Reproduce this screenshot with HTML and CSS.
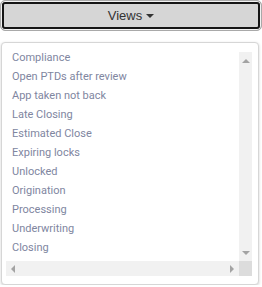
FILE: index.html
```html
<!DOCTYPE html>
<html lang="en">
<head>
  <meta charset="UTF-8">
  <meta name="viewport" content="width=device-width, initial-scale=1.0">
  <title>Views</title>
  <link rel="stylesheet" href="styles.css">
</head>
<body>
  <div class="views">
    <button class="views-btn">Views <span class="caret"></span></button>

    <div class="menu">
      <div class="scroller">
        <ul class="view-list">
          <li>Compliance</li>
          <li>Open PTDs after review</li>
          <li>App taken not back</li>
          <li>Late Closing</li>
          <li>Estimated Close</li>
          <li>Expiring locks</li>
          <li>Unlocked</li>
          <li>Origination</li>
          <li>Processing</li>
          <li>Underwriting</li>
          <li>Closing</li>
        </ul>
        <div class="vbar">
          <span class="arrow up"></span>
          <span class="arrow down"></span>
        </div>
        <div class="hbar">
          <span class="arrow left"></span>
          <span class="arrow right"></span>
        </div>
        <div class="corner"></div>
      </div>
    </div>
  </div>
</body>
</html>
```

FILE: styles.css
```css
body {
  margin: 0;
  background: #fff;
  font-family: Roboto, "Liberation Sans", Arial, sans-serif;
}

.views {
  width: 262px;
}

.views-btn {
  display: flex;
  justify-content: center;
  align-items: center;
  gap: 4px;
  width: 262px;
  height: 31px;
  margin: 0;
  padding: 0 0 1px;
  border: 1px solid #a9a9a9;
  border-radius: 5px;
  background: #d6d6d6;
  box-shadow: inset 0 0 0 1px #f2f2f2, inset 0 0 0 3px #151515;
  font-family: "Liberation Sans", Arial, sans-serif;
  font-size: 13px;
  color: #333;
}

.caret {
  width: 0;
  height: 0;
  margin-top: 1px;
  border-left: 4px solid transparent;
  border-right: 4px solid transparent;
  border-top: 4px solid #333;
}

.menu {
  box-sizing: border-box;
  width: 258px;
  height: 243px;
  margin: 11px 0 0 1px;
  padding: 9px 6px 8px 4px;
  border: 1px solid #d6d6d6;
  border-radius: 4px;
  background: #fff;
  box-shadow: 0 1px 3px rgba(0, 0, 0, 0.18);
}

.scroller {
  display: grid;
  grid-template-columns: 1fr 13px;
  grid-template-rows: 1fr 15px;
  height: 100%;
}

.view-list {
  list-style: none;
  margin: -4px 0 0;
  padding: 0 0 0 6px;
}

.view-list li {
  height: 19px;
  line-height: 19px;
  font-size: 11px;
  color: #80869f;
  white-space: nowrap;
}

.vbar {
  display: flex;
  flex-direction: column;
  justify-content: space-between;
  align-items: center;
  padding: 7px 0 6px;
  background: #f1f1f1;
}

.hbar {
  display: flex;
  justify-content: space-between;
  align-items: center;
  padding: 0 5px 0 5px;
  background: #f1f1f1;
}

.corner {
  background: #dcdcdc;
}

.arrow {
  width: 0;
  height: 0;
}

.arrow.up {
  border-left: 4px solid transparent;
  border-right: 4px solid transparent;
  border-bottom: 4px solid #a3a3a3;
}

.arrow.down {
  border-left: 4px solid transparent;
  border-right: 4px solid transparent;
  border-top: 4px solid #a3a3a3;
}

.arrow.left {
  border-top: 4px solid transparent;
  border-bottom: 4px solid transparent;
  border-right: 4px solid #a3a3a3;
}

.arrow.right {
  border-top: 4px solid transparent;
  border-bottom: 4px solid transparent;
  border-left: 4px solid #a3a3a3;
}
```
